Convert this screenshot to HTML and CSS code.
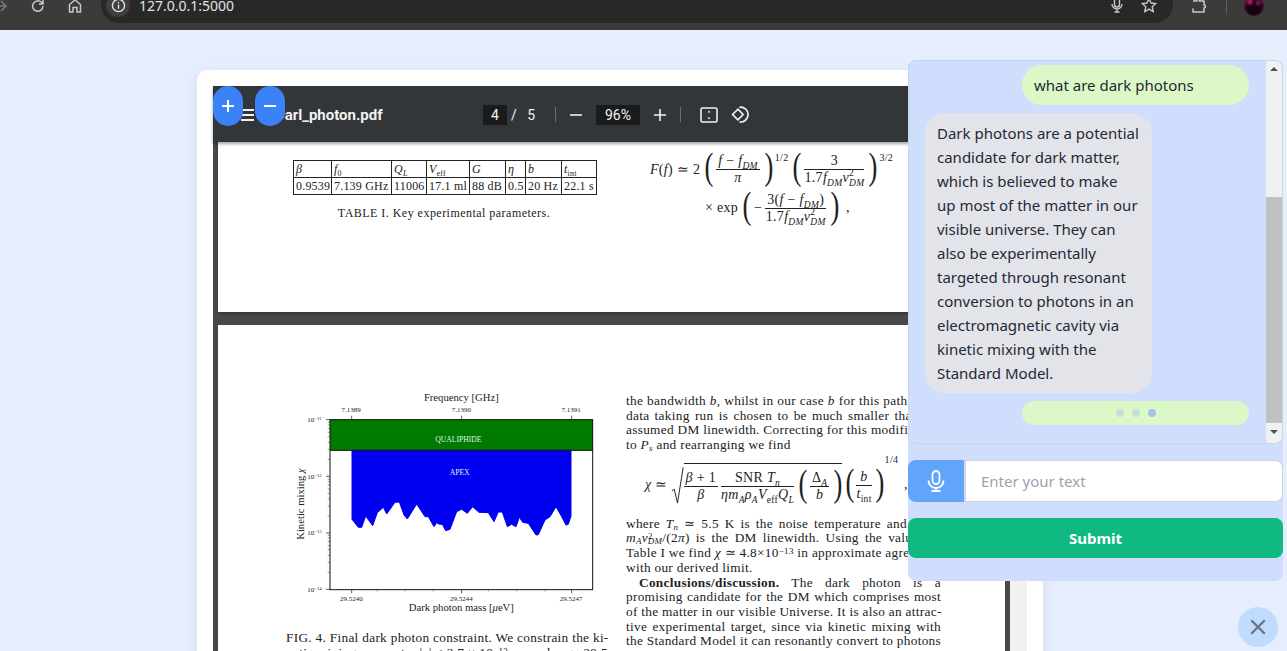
FILE: index.html
```html
<!DOCTYPE html>
<html lang="en">
<head>
  <meta charset="UTF-8" />
  <title>Dark photon chat</title>
  <link rel="stylesheet" href="styles.css">
</head>
<body>
  <header class="browser-bar">
    <svg class="bar-icon arrow" viewBox="0 0 16 16"><path d="M0 8h13M8 3l5 5-5 5"/></svg>
    <svg class="bar-icon reload" viewBox="0 0 16 16"><path d="M13 8a5.2 5.2 0 1 1-1.6-3.7L13 6M13 2v4H9"/></svg>
    <svg class="bar-icon home" viewBox="0 0 16 16"><path d="M2.5 14V6.5L8 2l5.500 4.500V14H10V9.500H6V14z"/></svg>
    <div class="url-pill">
      <span class="info-dot">
        <svg viewBox="0 0 16 16"><circle cx="8" cy="8" r="6.500"/><path d="M8 7v4.500M8 4.200v1.400"/></svg>
      </span>
      <span class="url-text">127.0.0.1:5000</span>
      <svg class="pill-icon" viewBox="0 0 16 16"><rect x="5.500" y="0" width="5" height="10" rx="2.500"/><path d="M3 7a5 5 0 0 0 10 0M8 12v3M5.500 15h5"/></svg>
      <svg class="pill-icon star" viewBox="0 0 16 16"><path d="M8 1.500l2 4.500 4.800.5-3.600 3.200 1 4.800L8 12.100l-4.200 2.400 1-4.800L1.200 6.500 6 6z"/></svg>
    </div>
    <svg class="bar-icon puzzle" viewBox="0 0 16 16"><path d="M2 3h3.500a1.500 1.500 0 0 1 3 0H13v4a1.500 1.500 0 0 1 0 3v4H2v-3.500"/></svg>
    <span class="bar-sep"></span>
    <span class="avatar"></span>
  </header>

  <main class="main">
    <section class="card">
      <div class="toolbar">
        <span class="menu-icon"><i></i><i></i><i></i></span>
        <span class="doc-name">Darl_photon.pdf</span>
        <span class="page-box">4</span>
        <span class="page-total">/&nbsp;&nbsp;&nbsp;5</span>
        <span class="tool-sep first"></span>
        <svg class="tool-icon minus" viewBox="0 0 14 14"><path d="M1 7h12"/></svg>
        <span class="zoom-box">96%</span>
        <svg class="tool-icon plus" viewBox="0 0 14 14"><path d="M1 7h12M7 1v12"/></svg>
        <span class="tool-sep second"></span>
        <svg class="tool-icon fit" viewBox="0 0 18 16"><rect x="1" y="1" width="16" height="14" rx="1.500"/><path d="M9 3.500l-1.500 2h3zM9 12.500l-1.500-2h3z"/></svg>
        <svg class="tool-icon rotate" viewBox="0 0 18 18"><path d="M6.500 4l-5 5 5 5 5-5zM8 2.200a7 7 0 1 1 0 13.800"/></svg>
      </div>

      <div class="viewer-body">
        <div class="pages">
          <article class="page page-one">
            <div class="two-col">
              <div class="col-left">
                <table class="params">
                  <tr><td class="c1"><i>β</i></td><td class="c2"><i>f</i><sub>0</sub></td><td class="c3"><i>Q<sub>L</sub></i></td><td class="c4"><i>V</i><sub>eff</sub></td><td class="c5"><i>G</i></td><td class="c6"><i>η</i></td><td class="c7"><i>b</i></td><td class="c8"><i>t</i><sub>int</sub></td></tr>
                  <tr><td>0.9539</td><td>7.139 GHz</td><td>11006</td><td>17.1 ml</td><td>88 dB</td><td>0.5</td><td>20 Hz</td><td>22.1 s</td></tr>
                </table>
                <p class="table-caption">TABLE I. Key experimental parameters.</p>
              </div>
              <div class="col-right">
                <div class="eq eq-first">
                  <span><i>F</i>(<i>f</i>) ≃ 2</span>
                  <span class="paren">(</span>
                  <span class="frac"><span class="num"><i>f</i> − <i>f<sub>DM</sub></i></span><span><i>π</i></span></span>
                  <span class="paren">)</span>
                  <sup class="exp">1/2</sup>
                  <span class="paren">(</span>
                  <span class="frac"><span class="num">3</span><span>1.7<i>f<sub>DM</sub>v</i><sup>2</sup><i><sub>DM</sub></i></span></span>
                  <span class="paren">)</span>
                  <sup class="exp">3/2</sup>
                </div>
                <div class="eq eq-second">
                  <span>× exp</span>
                  <span class="paren">(</span>
                  <span>−</span>
                  <span class="frac"><span class="num">3(<i>f</i> − <i>f<sub>DM</sub></i>)</span><span>1.7<i>f<sub>DM</sub>v</i><sup>2</sup><i><sub>DM</sub></i></span></span>
                  <span class="paren">)</span>
                  <span>&nbsp;,</span>
                </div>
              </div>
            </div>
          </article>

          <article class="page page-two">
            <div class="two-col">
              <div class="col-left">
                <svg class="plot" viewBox="0 0 1020 753">
                  <rect x="150" y="119" width="788" height="92" fill="#007a00"/>
                  <path fill="#0000f0" stroke="#0000f0" stroke-width="3" stroke-linejoin="round" d="M216 211V418L235 442L245 442L257 408L278 437L292 398L310 382L320 402L345 367L358 366L372 405L382 417L410 372L435 410L445 410L462 440L470 428L478 433L487 433L497 452L510 448L530 395L545 388L562 400L578 380L597 397L625 398L642 425L655 396L667 396L682 440L695 433L708 440L718 412L728 427L745 430L768 465L775 464L795 420L810 410L828 380L845 410L858 435L865 433L873 408V211Z"/>
                  <path d="M150 211H938" stroke="#111" stroke-width="3"/>
                  <rect x="150" y="119" width="788" height="510" fill="none" stroke="#111" stroke-width="3"/>
                  <path stroke="#111" stroke-width="2" d="M138 119H150M138 289H150M138 459H150M138 628H150M215 628V640M545 628V640M875 628V640M215 119V107M545 119V107M875 119V107"/>
                  <path stroke="#333" stroke-width="1.500" d="M143 127H150M143 135H150M143 145H150M143 157H150M143 170H150M143 187H150M143 208H150M143 238H150M143 297H150M143 305H150M143 315H150M143 327H150M143 340H150M143 357H150M143 378H150M143 408H150M143 466H150M143 474H150M143 484H150M143 496H150M143 509H150M143 526H150M143 547H150M143 577H150M292 628V634M375 628V634M460 628V634M625 628V634M710 628V634M795 628V634"/>
                  <g class="plot-tick">
                    <text x="213" y="95" text-anchor="middle">7.1389</text>
                    <text x="544" y="95" text-anchor="middle">7.1390</text>
                    <text x="873" y="95" text-anchor="middle">7.1391</text>
                    <text x="214" y="662" text-anchor="middle">29.5240</text>
                    <text x="544" y="662" text-anchor="middle">29.5244</text>
                    <text x="873" y="662" text-anchor="middle">29.5247</text>
                    <text x="82" y="126">10<tspan class="plot-sup" dy="-6">−11</tspan></text>
                    <text x="82" y="296">10<tspan class="plot-sup" dy="-6">−12</tspan></text>
                    <text x="82" y="466">10<tspan class="plot-sup" dy="-6">−13</tspan></text>
                    <text x="82" y="635">10<tspan class="plot-sup" dy="-6">−14</tspan></text>
                  </g>
                  <g class="plot-axis">
                    <text x="544" y="63" text-anchor="middle">Frequency [GHz]</text>
                    <text x="544" y="693" text-anchor="middle">Dark photon mass [<tspan font-style="italic">μ</tspan>eV]</text>
                    <text transform="translate(72 372) rotate(-90)" text-anchor="middle">Kinetic mixing <tspan font-style="italic">χ</tspan></text>
                  </g>
                  <text class="plot-label" x="535" y="185" text-anchor="middle">QUALIPHIDE</text>
                  <text class="plot-label" x="539" y="286" text-anchor="middle">APEX</text>
                </svg>
                <p class="line">FIG. 4. Final dark photon constraint. We constrain the ki-</p>
                <p class="line">netic mixing parameter |<i>χ</i>| &lt; 3.7 × 10<sup>−13</sup> around <i>m<sub>A</sub></i> ≃ 29.5</p>
              </div>
              <div class="col-right text-col">
                <p class="line">the bandwidth <i>b</i>, whilst in our case <i>b</i> for this pathfinder</p>
                <p class="line">data taking run is chosen to be much smaller than the</p>
                <p class="line">assumed DM linewidth. Correcting for this modification</p>
                <p class="line last">to <i>P<sub>s</sub></i> and rearranging we find</p>
                <div class="eq eq-root">
                  <span><i>χ</i> ≃</span>
                  <svg class="radical" viewBox="0 0 16 48"><path d="M1 30l3-2 4 17L15 1"/></svg>
                  <span class="root-body">
                    <span class="frac"><span class="num"><i>β</i> + 1</span><span><i>β</i></span></span>
                    <span class="frac"><span class="num">SNR <i>T<sub>n</sub></i></span><span><i>ηm<sub>A</sub>ρ<sub>A</sub>V</i><sub>eff</sub><i>Q<sub>L</sub></i></span></span>
                    <span class="paren">(</span>
                    <span class="frac"><span class="num">Δ<i><sub>A</sub></i></span><span><i>b</i></span></span>
                    <span class="paren">)</span>
                  </span>
                  <span class="paren">(</span>
                  <span class="frac"><span class="num"><i>b</i></span><span><i>t</i><sub>int</sub></span></span>
                  <span class="paren">)</span>
                  <sup class="exp">1/4</sup>
                  <span>&nbsp;,</span>
                </div>
                <p class="line">where <i>T<sub>n</sub></i> ≃ 5.5 K is the noise temperature and Δ<i><sub>A</sub></i> =</p>
                <p class="line"><i>m<sub>A</sub>v</i><sup>2</sup><i><sub>DM</sub></i>/(2<i>π</i>) is the DM linewidth. Using the values in</p>
                <p class="line">Table I we find <i>χ</i> ≃ 4.8×10<sup>−13</sup> in approximate agreement</p>
                <p class="line last">with our derived limit.</p>
                <p class="line indent"><b>Conclusions/discussion.</b> The dark photon is a</p>
                <p class="line">promising candidate for the DM which comprises most</p>
                <p class="line">of the matter in our visible Universe. It is also an attrac-</p>
                <p class="line">tive experimental target, since via kinetic mixing with</p>
                <p class="line">the Standard Model it can resonantly convert to photons</p>
              </div>
            </div>
          </article>
        </div>
        <div class="viewer-scroll"></div>
      </div>
    </section>
  </main>

  <button class="zoom-btn zoom-in">
    <svg viewBox="0 0 14 14"><path d="M1 7h12M7 1v12"/></svg>
  </button>
  <button class="zoom-btn zoom-out">
    <svg viewBox="0 0 14 14"><path d="M1 7h12"/></svg>
  </button>

  <aside class="chat-panel">
    <div class="chat-log">
      <div class="messages">
        <div class="bubble user">what are dark photons</div>
        <div class="bubble bot">Dark photons are a potential<br>candidate for dark matter,<br>which is believed to make<br>up most of the matter in our<br>visible universe. They can<br>also be experimentally<br>targeted through resonant<br>conversion to photons in an<br>electromagnetic cavity via<br>kinetic mixing with the<br>Standard Model.</div>
        <div class="bubble user typing">
          <span class="dot"></span><span class="dot"></span><span class="dot on"></span>
        </div>
      </div>
      <div class="chat-scroll">
        <span class="scroll-arrow up"></span>
        <span class="scroll-thumb"></span>
        <span class="scroll-arrow down"></span>
      </div>
    </div>
    <div class="input-row">
      <button class="mic-btn">
        <svg viewBox="0 0 24 24"><rect x="8.500" y="2" width="7" height="13" rx="3.500"/><path d="M4.500 11.500a7.500 7.500 0 0 0 15 0M12 19v3M7.500 22h9"/></svg>
      </button>
      <input class="chat-input" type="text" placeholder="Enter your text" />
    </div>
    <button class="submit-btn">Submit</button>
  </aside>

  <button class="close-btn">
    <svg viewBox="0 0 16 16"><path d="M2 2l12 12M14 2L2 14"/></svg>
  </button>
</body>
</html>
```

FILE: styles.css
```css
html, body {
  height: 651px;
  overflow: hidden;
}

body {
  margin: 0;
  background: #e6eefe;
  font-family: 'Noto Sans', sans-serif;
  position: relative;
}

p {
  margin: 0;
}

button {
  border: none;
  padding: 0;
  cursor: pointer;
}

/* browser chrome */
.browser-bar {
  height: 30px;
  box-sizing: border-box;
  background: #3b3b3b;
  display: flex;
  align-items: flex-end;
  padding-bottom: 7px;
  overflow: hidden;
}

.bar-icon {
  width: 16px;
  height: 16px;
  flex: none;
  fill: none;
  stroke: #c7c7c7;
  stroke-width: 1.500;
  margin-bottom: 9px;
}

.arrow {
  stroke: #7a7a7a;
  margin-left: -7px;
}

.reload {
  margin-left: 21px;
}

.home {
  margin-left: 21px;
}

.url-pill {
  margin-left: 18px;
  width: 1072px;
  height: 36px;
  flex: none;
  box-sizing: border-box;
  background: #282828;
  border-radius: 18px;
  display: flex;
  align-items: center;
  padding-left: 5px;
  color: #e3e3e3;
}

.info-dot {
  width: 24px;
  height: 24px;
  border-radius: 50%;
  background: #3f3f3f;
  display: flex;
  align-items: center;
  justify-content: center;
}

.info-dot svg {
  width: 15px;
  height: 15px;
  fill: none;
  stroke: #e3e3e3;
  stroke-width: 1.500;
}

.url-text {
  margin-left: 9px;
  font-size: 14px;
  flex: 1;
}

.pill-icon {
  width: 16px;
  height: 16px;
  fill: none;
  stroke: #c7c7c7;
  stroke-width: 1.400;
  margin-right: 16px;
}

.pill-icon.star {
  margin-right: 16px;
}

.puzzle {
  margin-left: 18px;
}

.bar-sep {
  width: 1px;
  height: 14px;
  background: #5c5c5c;
  margin: 0 0 9px 19px;
  flex: none;
}

.avatar {
  width: 20px;
  height: 20px;
  flex: none;
  margin: 0 0 7px 17px;
  border-radius: 50%;
  background:
    radial-gradient(circle at 30% 30%, #c81e5a 0, transparent 22%),
    radial-gradient(circle at 70% 35%, #a0125a 0, transparent 20%),
    radial-gradient(circle at 50% 60%, #14040e 40%, #6a0f4a 75%, #1a0412 95%);
}

/* main card */
.main {
  padding: 40px 0 0 197px;
}

.card {
  width: 846px;
  height: 700px;
  box-sizing: border-box;
  background: #fff;
  border-radius: 10px;
  padding: 16px;
  box-shadow: 0 4px 14px rgba(0, 0, 0, 0.08);
}

.toolbar {
  height: 56px;
  background: #323639;
  color: #f1f1f1;
  display: flex;
  align-items: center;
  font-family: 'Roboto', sans-serif;
  font-size: 14px;
  box-shadow: 0 2px 3px rgba(0, 0, 0, 0.35);
  position: relative;
  padding-top: 1px;
  box-sizing: border-box;
}

.menu-icon {
  margin-left: 28px;
  width: 13px;
  display: flex;
  flex-direction: column;
  gap: 3px;
}

.menu-icon i {
  height: 2px;
  background: #f1f1f1;
}

.doc-name {
  margin-left: 21px;
  width: 208px;
  font-size: 15px;
  font-weight: 700;
}

.page-box {
  width: 24px;
  height: 20px;
  line-height: 20px;
  background: #191b1c;
  text-align: center;
}

.page-total {
  margin-left: 4px;
  width: 44px;
}

.tool-sep {
  width: 1px;
  height: 15px;
  background: #6a6d70;
}

.tool-icon {
  fill: none;
  stroke: #f1f1f1;
  stroke-width: 1.600;
  flex: none;
}

.minus, .plus {
  width: 14px;
  height: 14px;
}

.minus {
  margin-left: 13px;
}

.zoom-box {
  margin-left: 13px;
  width: 44px;
  height: 20px;
  line-height: 20px;
  text-align: center;
  background: #191b1c;
}

.plus {
  margin-left: 13px;
}

.tool-sep.second {
  margin-left: 13px;
}

.fit {
  margin-left: 19px;
  width: 18px;
  height: 16px;
}

.fit path {
  fill: #f1f1f1;
  stroke: none;
}

.rotate {
  margin-left: 13px;
  width: 19px;
  height: 19px;
}

.viewer-body {
  display: flex;
  height: 600px;
}

.pages {
  width: 797px;
  box-sizing: border-box;
  padding: 0 5px;
  background: #47494c;
  display: flex;
  flex-direction: column;
  gap: 13px;
}

.viewer-scroll {
  width: 17px;
  background: #f1f1f1;
}

.page {
  background: #fff;
  padding-left: 68px;
  font-family: 'Liberation Serif', serif;
  color: #222;
  flex: none;
}

.page-one {
  height: 170px;
  box-sizing: border-box;
  padding-top: 18px;
  box-shadow: 0 2px 3px rgba(0, 0, 0, 0.25);
}

.page-two {
  padding-top: 55px;
  height: 500px;
  box-sizing: border-box;
}

.two-col {
  display: grid;
  grid-template-columns: 316px 315px;
  column-gap: 24px;
}

/* table I */
.params {
  border-collapse: collapse;
  margin-left: 7px;
  font-size: 12px;
  letter-spacing: 0.2px;
  table-layout: fixed;
  width: 303px;
}

.params td {
  box-sizing: border-box;
  border: 1px solid #222;
  height: 17px;
  padding: 0 0 0 2px;
  white-space: nowrap;
  overflow: hidden;
  line-height: 14px;
}

.params sub {
  font-size: 8px;
  line-height: 0;
}

.c1 { width: 38px; }
.c2 { width: 60px; }
.c3 { width: 35px; }
.c4 { width: 43px; }
.c5 { width: 36px; }
.c6 { width: 20px; }
.c7 { width: 36px; }
.c8 { width: 35px; }

.table-caption {
  margin-top: 11px;
  text-align: center;
  font-size: 12px;
  letter-spacing: 0.47px;
}

/* equations */
.eq {
  display: flex;
  align-items: center;
  font-size: 14px;
  letter-spacing: 0.3px;
  white-space: nowrap;
  gap: 3px;
}

.eq sub {
  font-size: 9.500px;
  line-height: 0;
}

.eq sup {
  font-size: 9.500px;
  line-height: 0;
}

/* stack the subscript under the square on v */
sup + i > sub {
  margin-left: -5px;
}

.eq-first {
  margin-left: 24px;
  height: 36px;
  margin-top: -9px;
}

.eq-second {
  margin-left: 79px;
  height: 36px;
  margin-top: 3px;
}

.frac {
  display: inline-flex;
  flex-direction: column;
  align-items: center;
  line-height: 15px;
}

.frac .num {
  align-self: stretch;
  text-align: center;
  border-bottom: 1px solid #222;
  padding: 0 2px 1px;
}

.paren {
  font-size: 38px;
  font-weight: 400;
  line-height: 36px;
  margin-top: -6px;
  transform: scaleX(0.7);
  width: 10px;
  text-align: center;
}

.exp.exp {
  font-size: 10px;
  align-self: flex-start;
  line-height: 14px;
  margin-left: -1px;
}

.eq-root {
  height: 64px;
  margin-left: 19px;
  gap: 2px;
  margin-right: -20px;
}

.radical {
  width: 13px;
  height: 48px;
  fill: none;
  stroke: #222;
  stroke-width: 1.200;
  margin: 2px -2px 0 1px;
}

.root-body {
  display: inline-flex;
  align-items: center;
  gap: 3px;
  border-top: 1px solid #222;
  margin-top: 2px;
  height: 44px;
}

/* running text */
.line {
  font-size: 13.300px;
  letter-spacing: 0.3px;
  line-height: 14.700px;
  text-align: justify;
  text-align-last: justify;
  white-space: nowrap;
  height: 14.700px;
}

.line.last {
  text-align-last: left;
}

.line.indent {
  padding-left: 13px;
}

.line sub, .line sup {
  font-size: 9px;
  line-height: 0;
}

.line sub {
  vertical-align: -2px;
}

.line sup {
  vertical-align: 3px;
}

.text-col {
  margin-top: 14px;
}

/* plot */
.plot {
  display: block;
  width: 340px;
  height: 251px;
  margin-left: -6px;
}

.plot-tick {
  font-size: 21px;
  font-family: 'Liberation Serif', serif;
  fill: #222;
}

.plot-sup {
  font-size: 14px;
}

.plot-axis {
  font-size: 32px;
  fill: #222;
}

.plot-label {
  font-size: 23px;
  fill: #dff5e6;
}

/* floating zoom buttons */
.zoom-btn {
  position: absolute;
  top: 86px;
  width: 30px;
  height: 40px;
  border-radius: 15px;
  background: #3b82f6;
  display: flex;
  align-items: center;
  justify-content: center;
}

.zoom-in {
  left: 213px;
}

.zoom-out {
  left: 255px;
}

.zoom-btn svg {
  width: 14px;
  height: 14px;
  fill: none;
  stroke: #fff;
  stroke-width: 2;
}

/* chat */
.chat-panel {
  position: absolute;
  left: 908px;
  top: 60px;
  width: 375px;
  height: 521px;
  background: #cfdefd;
  border-radius: 8px;
  display: flex;
  flex-direction: column;
}

.chat-log {
  height: 384px;
  flex: none;
  box-sizing: border-box;
  display: flex;
  border: 1px solid #c8d4ea;
  border-radius: 8px;
  overflow: hidden;
}

.messages {
  flex: 1;
  display: flex;
  flex-direction: column;
  gap: 8px;
  padding: 4px 17px 0 16px;
  overflow: hidden;
}

.bubble {
  width: 227px;
  box-sizing: border-box;
  padding: 8px 12px;
  border-radius: 20px;
  font-size: 15px;
  line-height: 24px;
  color: #1f2937;
  flex: none;
  white-space: nowrap;
}

.bubble.user {
  background: #dcf8c6;
  align-self: flex-end;
}

.bubble.bot {
  background: #e2e4e9;
}

.bubble.typing {
  height: 24px;
  padding: 0 0 0 94px;
  display: flex;
  align-items: center;
  gap: 8px;
}

.dot {
  width: 8px;
  height: 8px;
  border-radius: 50%;
  background: #c5e0d8;
}

.dot.on {
  background: #a3c4ec;
}

.chat-scroll {
  width: 16px;
  flex: none;
  background: #f1f1f1;
  display: flex;
  flex-direction: column;
  align-items: center;
}

.scroll-arrow {
  width: 0;
  height: 0;
  flex: none;
  border-left: 4px solid transparent;
  border-right: 4px solid transparent;
}

.scroll-arrow.up {
  border-bottom: 4px solid #505050;
  margin-top: 6px;
}

.scroll-arrow.down {
  border-top: 4px solid #505050;
  margin-top: 7px;
}

.scroll-thumb {
  width: 100%;
  height: 226px;
  margin-top: 126px;
  background: #c1c1c1;
}

.input-row {
  margin-top: 16px;
  height: 42px;
  display: flex;
  flex: none;
}

.mic-btn {
  width: 56px;
  flex: none;
  background: #60a5fa;
  border-radius: 8px 0 0 8px;
  display: flex;
  align-items: center;
  justify-content: center;
}

.mic-btn svg {
  width: 24px;
  height: 24px;
  fill: none;
  stroke: #fff;
  stroke-width: 1.800;
}

.chat-input {
  flex: 1;
  min-width: 0;
  margin-left: 1px;
  box-sizing: border-box;
  border: 1px solid #d1d5db;
  border-radius: 0 8px 8px 0;
  padding: 0 15px;
  font-family: 'Noto Sans', sans-serif;
  font-size: 15px;
  background: #fff;
}

.chat-input::placeholder {
  color: #9ca3af;
}

.submit-btn {
  margin-top: 16px;
  height: 40px;
  flex: none;
  border-radius: 8px;
  background: #10b981;
  color: #fff;
  font-family: 'Noto Sans', sans-serif;
  font-weight: 700;
  font-size: 15px;
}

.close-btn {
  position: absolute;
  left: 1238px;
  top: 607px;
  width: 40px;
  height: 40px;
  border-radius: 50%;
  background: #bfdbfe;
  display: flex;
  align-items: center;
  justify-content: center;
}

.close-btn svg {
  width: 18px;
  height: 18px;
  fill: none;
  stroke: #6b7280;
  stroke-width: 2;
}
```
